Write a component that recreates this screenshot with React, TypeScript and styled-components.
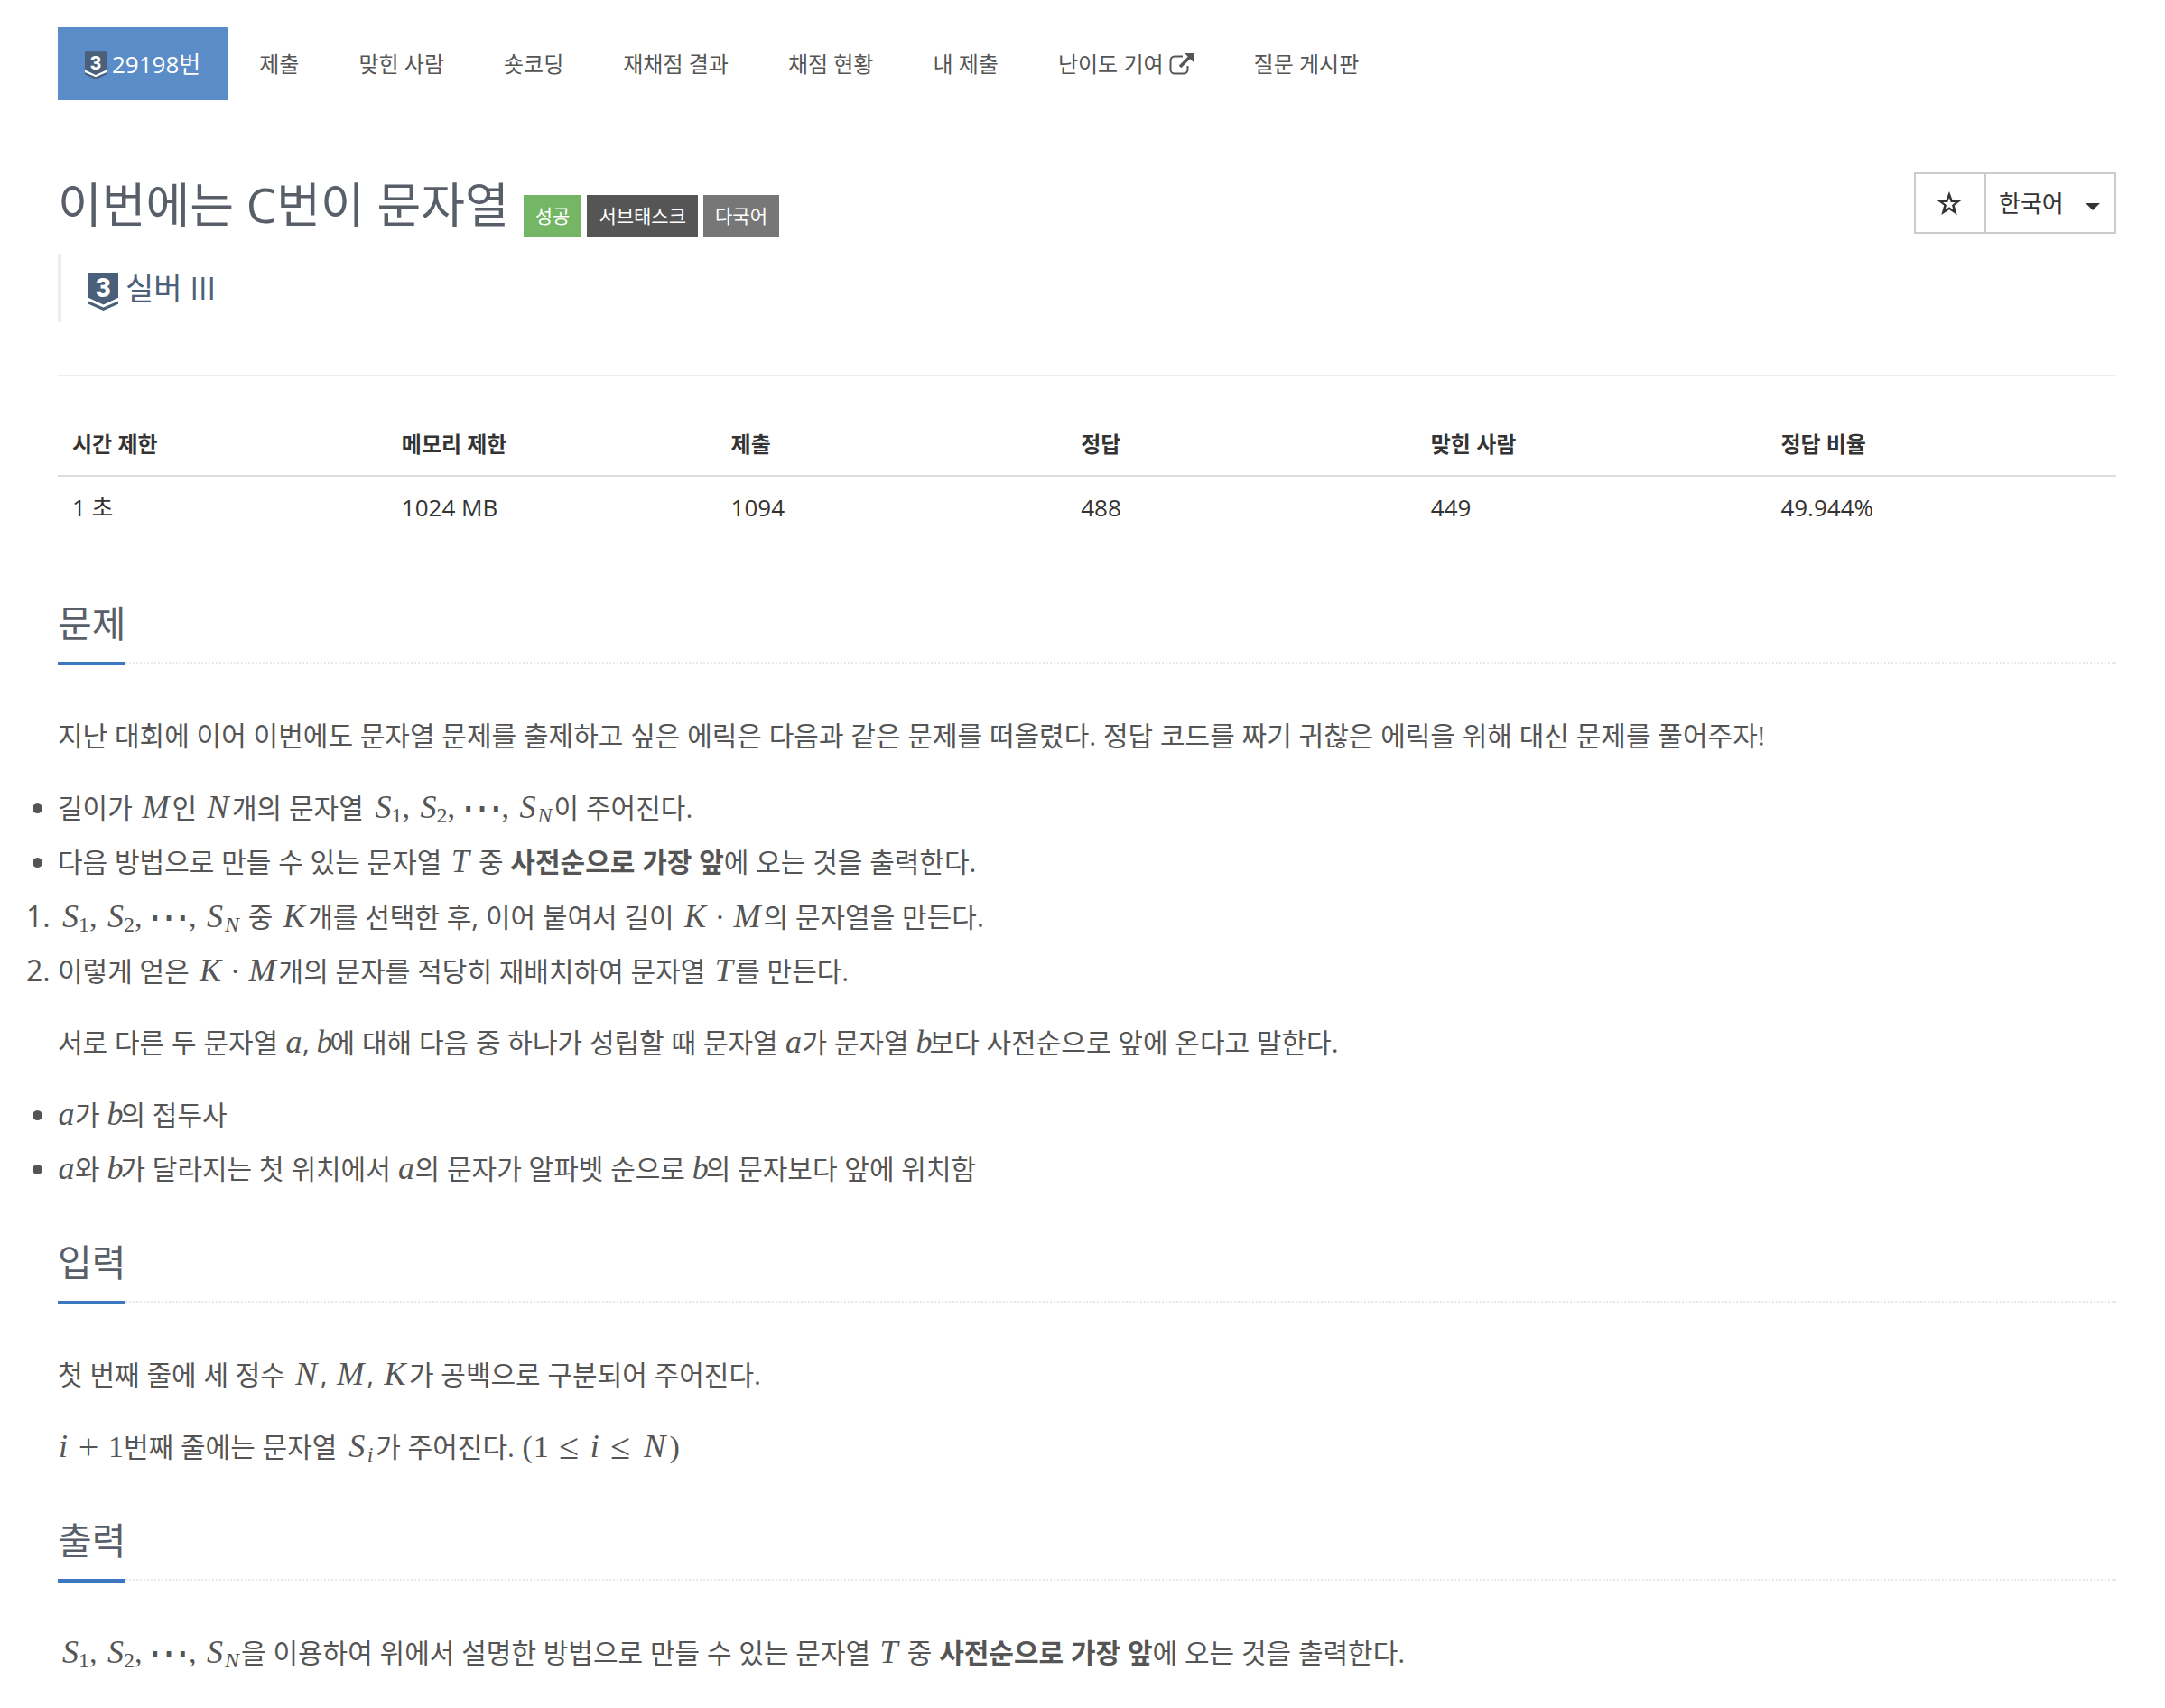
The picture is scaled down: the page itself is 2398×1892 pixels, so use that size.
import React from "react";
import styled, { createGlobalStyle } from "styled-components";

const sans = `"Open Sans", "Noto Sans CJK KR", sans-serif`;

const GlobalStyle = createGlobalStyle`
  *, *::before, *::after { box-sizing: border-box; }
  body { margin: 0; background: #fff; color: #333; font-family: ${sans}; }
`;

const Page = styled.main`
  padding: 30px 54px 24px 64px;
`;

const TabList = styled.ul`
  display: flex;
  gap: 4px;
  margin: 0 0 80px;
  padding: 0;
  list-style: none;
`;

const Tab = styled.a<{ $active?: boolean }>`
  display: flex;
  align-items: center;
  gap: 6px;
  height: 81px;
  padding: 0 ${(p) => (p.$active ? 30 : 31)}px;
  background: ${(p) => (p.$active ? "#5a8cc8" : "transparent")};
  color: ${(p) => (p.$active ? "#fff" : "#555")};
  font-size: ${(p) => (p.$active ? 26 : 24)}px;
  line-height: 36px;
  text-decoration: none;
  white-space: nowrap;
`;

const TitleBar = styled.header`
  display: flex;
  justify-content: space-between;
  align-items: flex-start;
`;

const TitleGroup = styled.div`
  display: flex;
  align-items: flex-end;
  gap: 16px;
  height: 71px;
`;

const Title = styled.h1`
  margin: 0;
  color: #585f69;
  font-size: 53px;
  font-weight: 400;
  line-height: 71px;
`;

const Labels = styled.div`
  display: flex;
  gap: 6px;
`;

const Label = styled.span<{ $color: string }>`
  padding: 0 13px;
  background: ${(p) => p.$color};
  color: #fff;
  font-size: 21px;
  line-height: 46px;
`;

const ButtonGroup = styled.div`
  display: flex;
  height: 68px;
  border: 2px solid #ccc;
`;

const StarButton = styled.button`
  display: grid;
  place-items: center;
  width: 78px;
  padding: 0 2px 0 0;
  border: 0;
  border-right: 2px solid #ccc;
  background: #fff;
  color: #333;
`;

const LanguageBox = styled.label`
  display: grid;
  grid-template-areas: "field";
  align-items: center;
  width: 142px;
`;

const LanguageSelect = styled.select`
  grid-area: field;
  height: 100%;
  padding: 0 14px;
  border: 0;
  appearance: none;
  background: #fff;
  color: #333;
  font-family: ${sans};
  font-size: 26px;
`;

const Caret = styled.span`
  grid-area: field;
  justify-self: end;
  margin: 8px 16px 0 0;
  border-top: 8px solid #333;
  border-left: 8px solid transparent;
  border-right: 8px solid transparent;
  pointer-events: none;
`;

const Tier = styled.blockquote`
  display: flex;
  align-items: center;
  gap: 8px;
  height: 76px;
  margin: 19px 0 58px;
  padding: 0 30px;
  border-left: 4px solid #eee;
  color: #4a607a;
  font-size: 34px;
  line-height: 44px;
`;

const Badge = styled.svg<{ $drop: number }>`
  flex: none;
  margin-top: ${(p) => p.$drop}px;
  overflow: visible;
`;

const Rule = styled.hr`
  height: 2px;
  margin: 0 0 40px;
  border: 0;
  background: #eee;
`;

const InfoTable = styled.table`
  width: 100%;
  margin-bottom: 20px;
  table-layout: fixed;
  border-collapse: collapse;
  color: #333;
  line-height: 37px;
  text-align: left;
`;

const HeadCell = styled.th<{ $width: number }>`
  width: ${(p) => p.$width}%;
  padding: 16px;
  border-bottom: 2px solid #ddd;
  font-size: 24px;
`;

const Cell = styled.td`
  padding: 16px;
  font-size: 26px;
`;

const Section = styled.section`
  padding-top: 40px;
`;

const Headline = styled.div`
  border-bottom: 2px dotted #e4e9f0;
`;

const SectionTitle = styled.h2`
  display: inline-block;
  margin: 0 0 -4px;
  padding-bottom: 10px;
  border-bottom: 4px solid #3b78c0;
  color: #585f69;
  font-size: 41px;
  font-weight: 400;
  line-height: 66px;
  vertical-align: top;
`;

const Body = styled.div`
  display: flex;
  flex-direction: column;
  gap: 20px;
  padding-top: 50px;
  color: #555;
  font-size: 30px;
  line-height: 60px;

  p, ul, ol { margin: 0; padding: 0; }
  li { height: 60px; }
  ol li::marker { font-size: 32px; }
`;

const MathSpan = styled.span`
  font-family: "Liberation Serif", serif;
  font-size: 34px;
  line-height: 40px;
  white-space: nowrap;
`;

type GlyphKind = "letter" | "digit" | "sub" | "operator" | "dots";

const glyphStyle: Record<GlyphKind, { size: number; shift: number; line: number }> = {
  letter: { size: 36, shift: 0, line: 40 },
  digit: { size: 34, shift: 0, line: 40 },
  sub: { size: 24, shift: -5, line: 24 },
  operator: { size: 40, shift: -2, line: 40 },
  dots: { size: 46, shift: -4, line: 40 },
};

const Glyph = styled.span<{ $kind: GlyphKind; $width: number; $italic: boolean; $align: string }>`
  display: inline-block;
  width: ${(p) => p.$width}px;
  font-size: ${(p) => glyphStyle[p.$kind].size}px;
  font-style: ${(p) => (p.$italic ? "italic" : "normal")};
  line-height: ${(p) => glyphStyle[p.$kind].line}px;
  text-align: ${(p) => p.$align};
  vertical-align: ${(p) => glyphStyle[p.$kind].shift}px;
`;

const widths: Record<string, number> = {
  M: 36, N: 31, K: 31, S: 23, T: 25, a: 19, b: 15, i: 12,
  "1": 17, "(": 13, ")": 13, "≤": 45, "+": 44, "·": 24, ",": 15, "⋯": 45,
};

function kindOf(c: string): GlyphKind {
  if (/[A-Za-z]/.test(c)) return "letter";
  if (c === "+" || c === "≤") return "operator";
  if (c === "⋯") return "dots";
  return "digit";
}

function Tex({ s }: { s: string }) {
  const out: React.ReactNode[] = [];
  for (let k = 0; k < s.length; k++) {
    const sub = s[k] === "_";
    if (sub) k++;
    const c = s[k];
    const width = sub ? (c === "N" ? 20 : 12) : widths[c];
    const align = c === "," ? "left" : c === "S" ? "right" : "center";
    out.push(
      <Glyph key={k} $kind={sub ? "sub" : kindOf(c)} $width={width} $italic={/[A-Za-z]/.test(c)} $align={align}>
        {c}
      </Glyph>
    );
  }
  return <MathSpan>{out}</MathSpan>;
}

function TierBadge({ width, height, drop }: { width: number; height: number; drop: number }) {
  return (
    <Badge width={width} height={height} viewBox="0 0 33 42" $drop={drop} aria-hidden="true">
      <path fill="#4a607a" d="M0 0h33v28L16.500 36 0 28z" />
      <path fill="#fff" d="M0 28l16.500 7.500L33 28v3.500L16.500 39 0 31.500z" />
      <path fill="#4a607a" d="M0 31.500v3.200L16.500 42 33 34.700v-3.200L16.500 38.500z" />
      <text x="16.500" y="27" fill="#fff" fontFamily="Roboto, sans-serif" fontWeight="900" fontSize="29" textAnchor="middle">3</text>
    </Badge>
  );
}

function ExternalIcon() {
  return (
    <svg width="28" height="24" viewBox="0 0 28 24" fill="none" stroke="currentColor" aria-hidden="true">
      <path strokeWidth="2" d="M15 3.500H6A4.500 4.500 0 0 0 1.500 8v10A4.500 4.500 0 0 0 6 22.500h10a4.500 4.500 0 0 0 4.500-4.500v-4" />
      <path strokeWidth="3.500" d="M12 15 23 4" />
      <path fill="currentColor" stroke="none" d="M17 0h10v10z" />
    </svg>
  );
}

function StarIcon() {
  return (
    <svg width="28" height="26" viewBox="0 0 28 26" aria-hidden="true">
      <path
        fill="currentColor"
        fillRule="evenodd"
        d="M14 0 17.500 9.500H28L19.800 15.600 22.700 26 14 20.200 5.300 26 8.200 15.600 0 9.500H10.500zM14 7 12.300 12H7.200L11 15.300 9.600 20.200 14 17.200 18.400 20.200 17 15.300 20.800 12H15.700z"
      />
    </svg>
  );
}

const tabs = ["제출", "맞힌 사람", "숏코딩", "재채점 결과", "채점 현황", "내 제출", "난이도 기여", "질문 게시판"];

const info: [string, string, number][] = [
  ["시간 제한", "1 초", 16],
  ["메모리 제한", "1024 MB", 16],
  ["제출", "1094", 17],
  ["정답", "488", 17],
  ["맞힌 사람", "449", 17],
  ["정답 비율", "49.944%", 17],
];

function Block({ title, children }: { title: string; children: React.ReactNode }) {
  return (
    <Section>
      <Headline>
        <SectionTitle>{title}</SectionTitle>
      </Headline>
      <Body>{children}</Body>
    </Section>
  );
}

export default function App() {
  return (
    <Page>
      <GlobalStyle />
      <nav>
        <TabList>
          <li>
            <Tab href="#problem" $active>
              <TierBadge width={24} height={31} drop={4} />
              29198번
            </Tab>
          </li>
          {tabs.map((t) => (
            <li key={t}>
              <Tab href="#">
                {t}
                {t === "난이도 기여" && <ExternalIcon />}
              </Tab>
            </li>
          ))}
        </TabList>
      </nav>

      <TitleBar>
        <TitleGroup>
          <Title>이번에는 C번이 문자열</Title>
          <Labels>
            <Label $color="#75b566">성공</Label>
            <Label $color="#555">서브태스크</Label>
            <Label $color="#777">다국어</Label>
          </Labels>
        </TitleGroup>
        <ButtonGroup>
          <StarButton type="button" aria-label="즐겨찾기"><StarIcon /></StarButton>
          <LanguageBox>
            <LanguageSelect aria-label="언어" defaultValue="ko">
              <option value="ko">한국어</option>
            </LanguageSelect>
            <Caret />
          </LanguageBox>
        </ButtonGroup>
      </TitleBar>

      <Tier>
        <TierBadge width={33} height={42} drop={8} />
        <span>실버 III</span>
      </Tier>
      <Rule />

      <InfoTable>
        <thead>
          <tr>{info.map(([h, , w]) => <HeadCell key={h} $width={w}>{h}</HeadCell>)}</tr>
        </thead>
        <tbody>
          <tr>{info.map(([h, v]) => <Cell key={h}>{v}</Cell>)}</tr>
        </tbody>
      </InfoTable>

      <Block title="문제">
        <p>지난 대회에 이어 이번에도 문자열 문제를 출제하고 싶은 에릭은 다음과 같은 문제를 떠올렸다. 정답 코드를 짜기 귀찮은 에릭을 위해 대신 문제를 풀어주자!</p>
        <div>
          <ul>
            <li>길이가 <Tex s="M" />인 <Tex s="N" />개의 문자열 <Tex s="S_1,S_2,⋯,S_N" />이 주어진다.</li>
            <li>다음 방법으로 만들 수 있는 문자열 <Tex s="T" /> 중 <b>사전순으로 가장 앞</b>에 오는 것을 출력한다.</li>
          </ul>
          <ol>
            <li><Tex s="S_1,S_2,⋯,S_N" /> 중 <Tex s="K" />개를 선택한 후, 이어 붙여서 길이 <Tex s="K·M" />의 문자열을 만든다.</li>
            <li>이렇게 얻은 <Tex s="K·M" />개의 문자를 적당히 재배치하여 문자열 <Tex s="T" />를 만든다.</li>
          </ol>
        </div>
        <p>서로 다른 두 문자열 <Tex s="a" />, <Tex s="b" />에 대해 다음 중 하나가 성립할 때 문자열 <Tex s="a" />가 문자열 <Tex s="b" />보다 사전순으로 앞에 온다고 말한다.</p>
        <ul>
          <li><Tex s="a" />가 <Tex s="b" />의 접두사</li>
          <li><Tex s="a" />와 <Tex s="b" />가 달라지는 첫 위치에서 <Tex s="a" />의 문자가 알파벳 순으로 <Tex s="b" />의 문자보다 앞에 위치함</li>
        </ul>
      </Block>

      <Block title="입력">
        <p>첫 번째 줄에 세 정수 <Tex s="N" />, <Tex s="M" />, <Tex s="K" />가 공백으로 구분되어 주어진다.</p>
        <p><Tex s="i+1" />번째 줄에는 문자열 <Tex s="S_i" />가 주어진다. <Tex s="(1≤i≤N)" /></p>
      </Block>

      <Block title="출력">
        <p><Tex s="S_1,S_2,⋯,S_N" />을 이용하여 위에서 설명한 방법으로 만들 수 있는 문자열 <Tex s="T" /> 중 <b>사전순으로 가장 앞</b>에 오는 것을 출력한다.</p>
      </Block>
    </Page>
  );
}
